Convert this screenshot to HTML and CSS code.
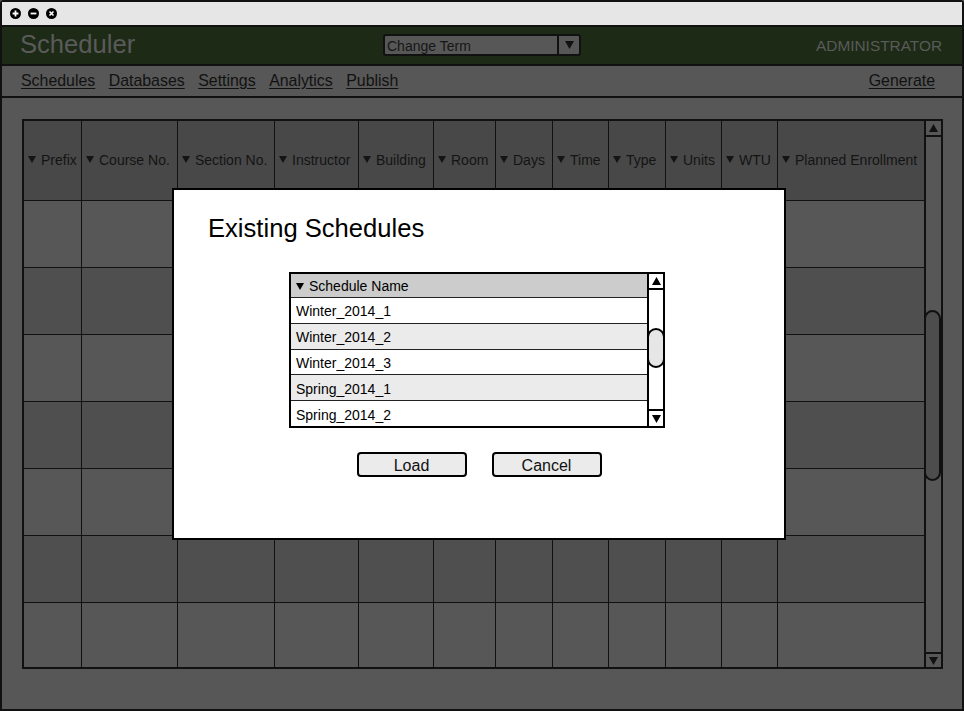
FILE: index.html
```html
<!DOCTYPE html>
<html>
<head>
<meta charset="utf-8">
<title>Scheduler</title>
<link rel="stylesheet" href="styles.css">
</head>
<body>
<div class="window">
  <div class="titlebar">
    <svg class="tb-icon" viewBox="0 0 11 11"><circle cx="5.5" cy="5.5" r="5.5" fill="#000"/><path d="M5.5 2.6v5.8M2.6 5.5h5.8" stroke="#fff" stroke-width="1.8"/></svg>
    <svg class="tb-icon" viewBox="0 0 11 11"><circle cx="5.5" cy="5.5" r="5.5" fill="#000"/><path d="M2.6 5.5h5.8" stroke="#fff" stroke-width="1.8"/></svg>
    <svg class="tb-icon" viewBox="0 0 11 11"><circle cx="5.5" cy="5.5" r="5.5" fill="#000"/><path d="M3.5 3.5l4 4M7.5 3.5l-4 4" stroke="#fff" stroke-width="1.6"/></svg>
  </div>
  <div class="appbar">
    <div class="app-title">Scheduler</div>
    <div class="term-select">
      <span class="term-label">Change Term</span>
      <span class="term-btn"><svg viewBox="0 0 9 8" class="tri"><polygon points="0,0 9,0 4.5,8" fill="#111"/></svg></span>
    </div>
    <div class="role">ADMINISTRATOR</div>
  </div>
  <div class="nav">
    <div class="nav-left">
      <a class="nav-link">Schedules</a>
      <a class="nav-link">Databases</a>
      <a class="nav-link">Settings</a>
      <a class="nav-link">Analytics</a>
      <a class="nav-link">Publish</a>
    </div>
    <a class="nav-link">Generate</a>
  </div>
  <div class="content">
    <div class="table">
      <div class="grid">
        <div class="th"><span class="dd"></span>Prefix</div>
        <div class="th"><span class="dd"></span>Course No.</div>
        <div class="th"><span class="dd"></span>Section No.</div>
        <div class="th"><span class="dd"></span>Instructor</div>
        <div class="th"><span class="dd"></span>Building</div>
        <div class="th"><span class="dd"></span>Room</div>
        <div class="th"><span class="dd"></span>Days</div>
        <div class="th"><span class="dd"></span>Time</div>
        <div class="th"><span class="dd"></span>Type</div>
        <div class="th"><span class="dd"></span>Units</div>
        <div class="th"><span class="dd"></span>WTU</div>
        <div class="th last"><span class="dd"></span>Planned Enrollment</div>

        <div class="td"></div><div class="td"></div><div class="td"></div><div class="td"></div><div class="td"></div><div class="td"></div><div class="td"></div><div class="td"></div><div class="td"></div><div class="td"></div><div class="td"></div><div class="td last"></div>
        <div class="td alt"></div><div class="td alt"></div><div class="td alt"></div><div class="td alt"></div><div class="td alt"></div><div class="td alt"></div><div class="td alt"></div><div class="td alt"></div><div class="td alt"></div><div class="td alt"></div><div class="td alt"></div><div class="td alt last"></div>
        <div class="td"></div><div class="td"></div><div class="td"></div><div class="td"></div><div class="td"></div><div class="td"></div><div class="td"></div><div class="td"></div><div class="td"></div><div class="td"></div><div class="td"></div><div class="td last"></div>
        <div class="td alt"></div><div class="td alt"></div><div class="td alt"></div><div class="td alt"></div><div class="td alt"></div><div class="td alt"></div><div class="td alt"></div><div class="td alt"></div><div class="td alt"></div><div class="td alt"></div><div class="td alt"></div><div class="td alt last"></div>
        <div class="td"></div><div class="td"></div><div class="td"></div><div class="td"></div><div class="td"></div><div class="td"></div><div class="td"></div><div class="td"></div><div class="td"></div><div class="td"></div><div class="td"></div><div class="td last"></div>
        <div class="td alt"></div><div class="td alt"></div><div class="td alt"></div><div class="td alt"></div><div class="td alt"></div><div class="td alt"></div><div class="td alt"></div><div class="td alt"></div><div class="td alt"></div><div class="td alt"></div><div class="td alt"></div><div class="td alt last"></div>
        <div class="td bottom"></div><div class="td bottom"></div><div class="td bottom"></div><div class="td bottom"></div><div class="td bottom"></div><div class="td bottom"></div><div class="td bottom"></div><div class="td bottom"></div><div class="td bottom"></div><div class="td bottom"></div><div class="td bottom"></div><div class="td bottom last"></div>
      </div>
      <div class="vscroll">
        <div class="sb-up"><svg viewBox="0 0 9 8" class="tri"><polygon points="0,8 9,8 4.5,0" fill="#111"/></svg></div>
        <div class="sb-track"><div class="sb-thumb"></div></div>
        <div class="sb-down"><svg viewBox="0 0 9 8" class="tri"><polygon points="0,0 9,0 4.5,8" fill="#111"/></svg></div>
      </div>
    </div>
  </div>

  <div class="modal">
    <h1 class="modal-title">Existing Schedules</h1>
    <div class="list">
      <div class="list-body">
        <div class="list-head"><span class="dd dark"></span>Schedule Name</div>
        <div class="list-row">Winter_2014_1</div>
        <div class="list-row alt">Winter_2014_2</div>
        <div class="list-row">Winter_2014_3</div>
        <div class="list-row alt">Spring_2014_1</div>
        <div class="list-row end">Spring_2014_2</div>
      </div>
      <div class="lscroll">
        <div class="sb-up"><svg viewBox="0 0 9 8" class="tri"><polygon points="0,8 9,8 4.5,0" fill="#000"/></svg></div>
        <div class="sb-track"><div class="lthumb"></div></div>
        <div class="sb-down"><svg viewBox="0 0 9 8" class="tri"><polygon points="0,0 9,0 4.5,8" fill="#000"/></svg></div>
      </div>
    </div>
    <div class="buttons">
      <button class="btn">Load</button>
      <button class="btn">Cancel</button>
    </div>
  </div>
</div>
</body>
</html>
```
FILE: styles.css
```css
* { box-sizing: border-box; }
html, body { margin: 0; padding: 0; }
body {
  width: 964px;
  height: 711px;
  overflow: hidden;
  font-family: "Liberation Sans", Arial, sans-serif;
  background: #575757;
}
.window {
  position: relative;
  width: 964px;
  height: 711px;
  border: 2px solid #111;
  border-radius: 4px 4px 0 0;
  display: flex;
  flex-direction: column;
  background: #575757;
}
.titlebar {
  height: 25px;
  background: #e6e6e6;
  border-bottom: 2px solid #111;
  display: flex;
  align-items: center;
  gap: 7px;
  padding-left: 8px;
  flex: none;
}
.tb-icon { width: 11px; height: 11px; display: block; }
.appbar {
  height: 39px;
  flex: none;
  background: #1d2a15;
  border-bottom: 2px solid #111;
  display: flex;
  align-items: center;
  padding: 0 20px 0 18px;
  position: relative;
}
.app-title {
  font-size: 25.6px;
  color: #5a5a5a;
  flex: 1;
  line-height: 1;
  margin-top: -1px;
}
.term-select {
  position: absolute;
  left: 381px;
  top: 7px;
  width: 198px;
  height: 22px;
  border: 2px solid #111;
  border-radius: 3px;
  background: #575757;
  display: flex;
  align-items: center;
}
.term-label {
  flex: 1;
  font-size: 14px;
  color: #161616;
  padding-left: 2px;
  padding-top: 2px;
}
.term-btn {
  width: 22px;
  height: 100%;
  border-left: 2px solid #111;
  display: flex;
  align-items: center;
  justify-content: center;
}
.tri { width: 9px; height: 8px; display: block; }
.role {
  font-size: 15.4px;
  color: #5a5a5a;
  margin-top: 1px;
}
.nav {
  height: 32px;
  flex: none;
  border-bottom: 2px solid #111;
  background: #575757;
  display: flex;
  align-items: center;
  justify-content: space-between;
  padding: 0 27px 0 19px;
}
.nav-left { display: flex; gap: 13.5px; }
.nav-link {
  font-size: 15.9px;
  color: #111;
  text-decoration: underline;
  text-underline-offset: 2px;
}
.content {
  flex: 1;
  padding: 21px 19px 0 20px;
  background: #575757;
}
.table {
  width: 921px;
  height: 550px;
  border: 2px solid #111;
  display: flex;
}
.grid {
  display: grid;
  grid-template-columns: 58px 96px 97px 84px 75px 62px 57px 56px 57px 56px 56px 146px;
  grid-template-rows: 80px repeat(6, 67px) 1fr;
  width: 900px;
}
.th {
  background: #484848;
  border-right: 1px solid #111;
  border-bottom: 1px solid #111;
  display: flex;
  align-items: center;
  padding-left: 4px;
  padding-bottom: 2px;
  font-size: 14px;
  color: #141414;
  white-space: nowrap;
  overflow: hidden;
}
.dd {
  display: inline-block;
  width: 0;
  height: 0;
  border-left: 4px solid transparent;
  border-right: 4px solid transparent;
  border-top: 7px solid #141414;
  margin-right: 5px;
  flex: none;
}
.dd.dark { border-top-color: #000; }
.td {
  background: #575757;
  border-right: 1px solid #111;
  border-bottom: 1px solid #111;
}
.td.alt { background: #4f4f4f; }
.td.bottom { border-bottom: none; }
.th.last, .td.last { border-right: none; }
.vscroll {
  width: 17px;
  border-left: 2px solid #111;
  display: flex;
  flex-direction: column;
  background: #575757;
}
.sb-up {
  height: 16px;
  border-bottom: 2px solid #111;
  display: flex;
  align-items: center;
  justify-content: center;
  flex: none;
}
.sb-down {
  height: 15px;
  border-top: 2px solid #111;
  display: flex;
  align-items: center;
  justify-content: center;
  flex: none;
}
.sb-track { flex: 1; position: relative; }
.sb-thumb {
  position: absolute;
  left: -2px;
  width: 17px;
  top: 173px;
  height: 171px;
  border: 2px solid #111;
  border-radius: 9px;
  background: #4d4d4d;
}

/* modal */
.modal {
  position: absolute;
  left: 170px;
  top: 186px;
  width: 614px;
  height: 352px;
  background: #fff;
  border: 2px solid #000;
  display: flex;
  flex-direction: column;
  align-items: center;
}
.modal-title {
  align-self: flex-start;
  margin: 23px 0 0 34px;
  font-size: 25.6px;
  font-weight: normal;
  color: #000;
  line-height: 30px;
}
.list {
  margin-top: 29px;
  margin-right: 4px;
  width: 376px;
  height: 156px;
  border: 2px solid #000;
  display: flex;
}
.list-body {
  flex: 1;
  display: flex;
  flex-direction: column;
}
.list-head {
  height: 24px;
  flex: none;
  background: #cccccc;
  border-bottom: 1px solid #222;
  display: flex;
  align-items: center;
  padding-left: 5px;
  padding-top: 1px;
  font-size: 14px;
  color: #000;
}
.list-row {
  flex: 1;
  background: #fff;
  border-bottom: 1px solid #222;
  display: flex;
  align-items: center;
  padding-left: 5px;
  padding-top: 2px;
  font-size: 14px;
  color: #000;
}
.list-row.alt { background: #ebebeb; }
.list-row.end { border-bottom: none; }
.lscroll {
  width: 16px;
  border-left: 2px solid #000;
  display: flex;
  flex-direction: column;
  background: #fff;
}
.lscroll .sb-up { border-bottom-color: #000; }
.lscroll .sb-down { border-top-color: #000; height: 17px; }
.lthumb {
  position: absolute;
  left: -2px;
  width: 18px;
  top: 38px;
  height: 40px;
  border: 2px solid #000;
  border-radius: 9px;
  background: #e6e6e6;
}
.buttons {
  margin-top: 24px;
  display: flex;
  gap: 25px;
}
.btn {
  width: 110px;
  height: 25px;
  border: 2px solid #000;
  border-radius: 4px;
  background: #ebebeb;
  font-family: "Liberation Sans", Arial, sans-serif;
  font-size: 16px;
  color: #111;
  padding: 2px 0 0;
  line-height: 20px;
}
```
